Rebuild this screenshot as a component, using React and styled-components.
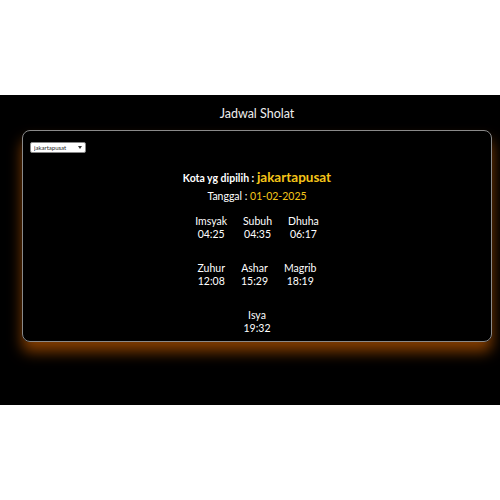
import React, { useState } from 'react'
import styled, { createGlobalStyle } from 'styled-components'

const GlobalStyle = createGlobalStyle`
  body {
    margin: 0;
    background: #ffffff;
    font-family: Lato, "Noto Sans", sans-serif;
  }
`

const Page = styled.div`
  margin-top: 95px;
  height: 310px;
  background: #000000;
  color: #ffffff;
  padding: 8px 8px 0 22px;
  box-sizing: border-box;
  overflow: hidden;
`

const Title = styled.h1`
  margin: 0;
  text-align: center;
  font-size: 12.5px;
  font-weight: 400;
  line-height: 22px;
  color: #eeeeee;
`

const Card = styled.div`
  margin-top: 5px;
  height: 212px;
  box-sizing: border-box;
  border: 1px solid #8a8a8a;
  border-radius: 8px;
  padding: 11px 7px;
  box-shadow: 0 10px 14px rgba(255, 120, 0, 0.5);
`

const SelectWrap = styled.div`
  position: relative;
  width: 56px;

  &::after {
    content: '';
    position: absolute;
    right: 4px;
    top: 4px;
    border-left: 2px solid transparent;
    border-right: 2px solid transparent;
    border-top: 3px solid #333;
    pointer-events: none;
  }
`

const CitySelect = styled.select`
  display: block;
  appearance: none;
  width: 56px;
  height: 11px;
  font-family: Lato, sans-serif;
  font-size: 6px;
  padding: 0 3px;
  border: 1px solid #888;
  border-radius: 2px;
  background: #ffffff;
  color: #222;
  outline: none;
`

const Info = styled.div`
  display: flex;
  flex-direction: column;
  align-items: center;
  margin-top: 15px;
`

const CityLine = styled.div`
  font-size: 10.5px;
  font-weight: 700;
  line-height: 18px;
`

const Highlight = styled.span`
  color: #f5c518;
  font-size: ${(p) => (p.$big ? '13.5px' : '10.5px')};
  font-weight: ${(p) => (p.$big ? 700 : 400)};
`

const DateLine = styled.div`
  font-size: 10.5px;
  line-height: 18px;
`

const TimesGrid = styled.div`
  display: flex;
  flex-wrap: wrap;
  justify-content: center;
  width: 150px;
  row-gap: 21px;
  margin-top: 10px;
`

const TimeItem = styled.div`
  text-align: center;
  padding: 0 8px;
  font-size: 10.5px;
  line-height: 13px;
`

const times = [
  ['Imsyak', '04:25'],
  ['Subuh', '04:35'],
  ['Dhuha', '06:17'],
  ['Zuhur', '12:08'],
  ['Ashar', '15:29'],
  ['Magrib', '18:19'],
  ['Isya', '19:32'],
]

export default function App() {
  const [city, setCity] = useState('jakartapusat')

  return (
    <>
      <GlobalStyle />
      <Page>
        <Title>Jadwal Sholat</Title>
        <Card>
          <SelectWrap>
            <CitySelect value={city} onChange={(e) => setCity(e.target.value)}>
              <option value="jakartapusat">jakartapusat</option>
              <option value="bandung">bandung</option>
            </CitySelect>
          </SelectWrap>
          <Info>
            <CityLine>
              Kota yg dipilih : <Highlight $big>{city}</Highlight>
            </CityLine>
            <DateLine>
              Tanggal : <Highlight>01-02-2025</Highlight>
            </DateLine>
            <TimesGrid>
              {times.map(([name, time]) => (
                <TimeItem key={name}>
                  <div>{name}</div>
                  <div>{time}</div>
                </TimeItem>
              ))}
            </TimesGrid>
          </Info>
        </Card>
      </Page>
    </>
  )
}
